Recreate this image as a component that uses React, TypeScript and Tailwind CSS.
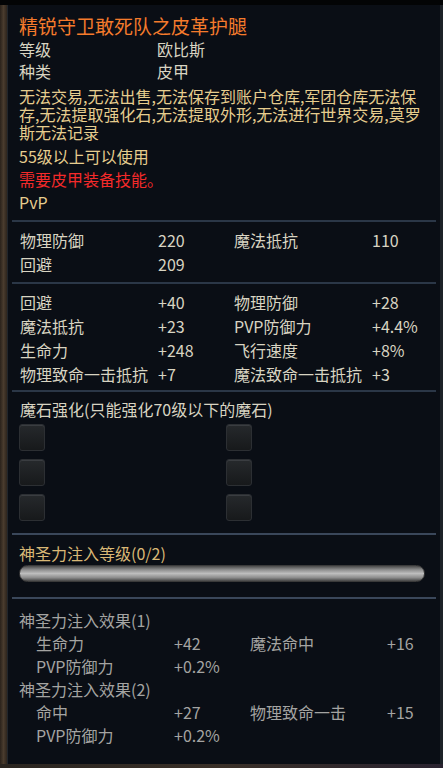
const Sep = ({ light = false }: { light?: boolean }) => (
  <div className={light ? "h-[2px] mx-[4px] bg-[#3a475a]" : "h-[2px] mx-[4px] bg-[#2b3747]"} />
);

const StatRow = ({ a, av, b, bv }: { a: string; av: string; b?: string; bv?: string }) => (
  <div className="flex h-[24px] items-center px-[12px] text-[#d8d4c2]">
    <span className="w-[138px]">{a}</span>
    <span className="w-[76px]">{av}</span>
    <span className="w-[138px]">{b}</span>
    <span>{bv}</span>
  </div>
);

const SubRow = ({ a, av, b, bv }: { a: string; av: string; b?: string; bv?: string }) => (
  <div className="flex h-[23px] items-center pl-[28px] text-[#a4a4a2]">
    <span className="w-[138px]">{a}</span>
    <span className="w-[76px]">{av}</span>
    <span className="w-[137px]">{b}</span>
    <span>{bv}</span>
  </div>
);

const Socket = () => (
  <div className="w-[26px] h-[27px] rounded-[3px] border border-[#2c2f33] bg-[linear-gradient(to_bottom,#26292c,#17191b)] shadow-[inset_0_1px_0_#3a3d41]" />
);

export default function App() {
  return (
    <div className="w-[443px] h-[768px] flex flex-col bg-[#050505] font-['Noto_Sans_CJK_SC',sans-serif] text-[16px] overflow-hidden">
      <div className="h-[5px] bg-[#030405]" />
      <div className="flex flex-1">
        <div className="w-[7px] bg-[linear-gradient(to_right,#2a221b,#4a3c2e,#2e251d)]" />
        <div className="flex-1 flex flex-col bg-[#0a0e15] border-l border-[#22262b] pt-[7px]">
          <div className="h-[26px] flex items-center px-[11px] text-[19px] text-[#f57b2c] leading-none">
            精锐守卫敢死队之皮革护腿
          </div>
          <div className="flex h-[22px] items-center px-[11px] text-[#d8d4c2]">
            <span className="w-[138px]">等级</span>
            <span>欧比斯</span>
          </div>
          <div className="flex h-[22px] items-center px-[11px] text-[#d8d4c2]">
            <span className="w-[138px]">种类</span>
            <span>皮甲</span>
          </div>
          <p className="mt-[5px] px-[11px] pr-[14px] leading-[18px] text-[#e6cd8e]">
            无法交易,无法出售,无法保存到账户仓库,军团仓库无法保存,无法提取强化石,无法提取外形,无法进行世界交易,莫罗斯无法记录
          </p>
          <div className="h-[23px] mt-[3px] flex items-center px-[11px] text-[#e6cd8e]">55级以上可以使用</div>
          <div className="h-[23px] flex items-center px-[11px] text-[#f42a2a]">需要皮甲装备技能。</div>
          <div className="h-[23px] flex items-center px-[11px] text-[#e6cd8e]">PvP</div>
          <div className="mt-[7px]">
            <Sep />
          </div>
          <div className="pt-[6px] pb-[6px]">
            <StatRow a="物理防御" av="220" b="魔法抵抗" bv="110" />
            <StatRow a="回避" av="209" />
          </div>
          <Sep />
          <div className="pt-[6px] pb-[4px]">
            <StatRow a="回避" av="+40" b="物理防御" bv="+28" />
            <StatRow a="魔法抵抗" av="+23" b="PVP防御力" bv="+4.4%" />
            <StatRow a="生命力" av="+248" b="飞行速度" bv="+8%" />
            <StatRow a="物理致命一击抵抗" av="+7" b="魔法致命一击抵抗" bv="+3" />
          </div>
          <Sep />
          <div className="h-[24px] mt-[5px] flex items-center px-[12px] text-[#d8d4c2]">
            魔石强化(只能强化70级以下的魔石)
          </div>
          <div className="grid grid-cols-2 gap-y-[8px] px-[11px] mt-[3px]">
            <Socket />
            <div className="pl-[2px]"><Socket /></div>
            <Socket />
            <div className="pl-[2px]"><Socket /></div>
            <Socket />
            <div className="pl-[2px]"><Socket /></div>
          </div>
          <div className="mt-[12px]">
            <Sep light />
          </div>
          <div className="h-[24px] mt-[6px] flex items-center px-[11px] text-[#d9b876]">
            神圣力注入等级(0/2)
          </div>
          <div className="mx-[11px] mr-[15px] h-[17px] rounded-full border border-[#3a3a3a] bg-[linear-gradient(to_bottom,#4a4a4a,#8e8e8e_25%,#bdbdbd_50%,#8c8c8c_78%,#464646)]" />
          <div className="mt-[15px]">
            <Sep light />
          </div>
          <div className="pt-[9px]">
            <div className="h-[23px] flex items-center px-[11px] text-[#a4a4a2]">神圣力注入效果(1)</div>
            <SubRow a="生命力" av="+42" b="魔法命中" bv="+16" />
            <SubRow a="PVP防御力" av="+0.2%" />
            <div className="h-[23px] flex items-center px-[11px] text-[#a4a4a2]">神圣力注入效果(2)</div>
            <SubRow a="命中" av="+27" b="物理致命一击" bv="+15" />
            <SubRow a="PVP防御力" av="+0.2%" />
          </div>
        </div>
        <div className="w-[3px] bg-[#1d2228]" />
      </div>
      <div className="h-[4px] bg-[linear-gradient(to_right,#2a2520,#3a3028,#2a2330)]" />
    </div>
  );
}
